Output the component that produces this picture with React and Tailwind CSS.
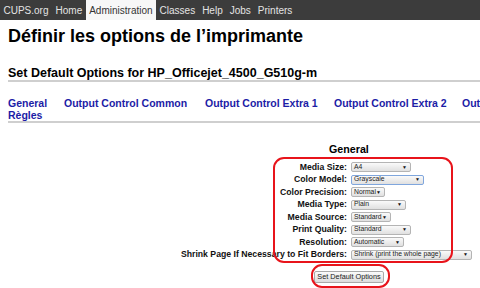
const navItems = ["CUPS.org", "Home", "Administration", "Classes", "Help", "Jobs", "Printers"];

const tabs = [
  { label: "General", w: "w-[56px]" },
  { label: "Output Control Common", w: "w-[141px]" },
  { label: "Output Control Extra 1", w: "w-[129px]" },
  { label: "Output Control Extra 2", w: "w-[128px]" },
  { label: "Output Control Extra 3", w: "w-[130px]" },
];

const options = [
  { label: "Media Size:", value: "A4", w: "w-[60px]" },
  { label: "Color Model:", value: "Grayscale", w: "w-[73px]", focus: true },
  { label: "Color Precision:", value: "Normal", w: "w-[34px]" },
  { label: "Media Type:", value: "Plain", w: "w-[55px]" },
  { label: "Media Source:", value: "Standard", w: "w-[40px]" },
  { label: "Print Quality:", value: "Standard", w: "w-[60px]" },
  { label: "Resolution:", value: "Automatic", w: "w-[53px]" },
  { label: "Shrink Page If Necessary to Fit Borders:", value: "Shrink (print the whole page)", w: "w-[121px]" },
];

function FakeSelect({ value, w, focus }) {
  return (
    <div
      className={`${w} h-[10px] flex items-center justify-between pl-[2px] pr-[3px] rounded-[2px] border bg-gradient-to-b from-[#fafafa] to-[#e0e0e0] text-[6.8px] leading-none text-[#222] overflow-hidden ${
        focus ? "border-[#7fa6dd]" : "border-[#b4b4b4]"
      }`}
    >
      <span className="whitespace-nowrap">{value}</span>
      <span className="text-[5px] text-[#111]">▼</span>
    </div>
  );
}

export default function App() {
  return (
    <div className="relative w-[480px] h-[288px] overflow-hidden bg-white font-['Liberation_Sans',Arial,sans-serif] text-black">
      {/* barre de navigation */}
      <div className="h-[20px] bg-[#3c3c3c] flex items-stretch text-[10px]">
        {navItems.map((item) => (
          <div
            key={item}
            className={`px-[3.5px] flex items-center ${
              item === "Administration" ? "bg-[#f7f7f7] text-[#333]" : "text-[#e4e4e4]"
            }`}
          >
            {item}
          </div>
        ))}
      </div>

      <h1 className="pl-[8px] pt-[6px] text-[18px] font-bold leading-[21px]">
        Définir les options de l’imprimante
      </h1>

      <h2 className="ml-[8px] mt-[19px] border-b-2 border-[#cfcfcf] text-[12.5px] font-bold leading-[14px] whitespace-nowrap">
        Set Default Options for HP_Officejet_4500_G510g-m
      </h2>

      {/* onglets */}
      <div className="ml-[8px] mt-[15px] border-b-2 border-[#cfcfcf] text-[10.5px] font-bold leading-[12px] text-[#1c1ca6]">
        <div className="flex whitespace-nowrap">
          {tabs.map((t) => (
            <div key={t.label} className={`${t.w} shrink-0`}>
              {t.label}
            </div>
          ))}
        </div>
        <div>Règles</div>
      </div>

      {/* formulaire */}
      <div className="ml-[181px] w-[290px] mt-[20px]">
        <div className="pl-[148px] text-[10.7px] font-bold leading-[12px]">General</div>
        <div className="mt-[6px] grid grid-cols-[166px_1fr] gap-x-[4px]">
          {options.map((o) => (
            <div key={o.label} className="contents">
              <div className="h-[12.5px] flex items-center justify-end text-[8.7px] font-bold whitespace-nowrap text-[#111]">
                {o.label}
              </div>
              <div className="h-[12.5px] flex items-center">
                <FakeSelect value={o.value} w={o.w} focus={o.focus} />
              </div>
            </div>
          ))}
        </div>
        <div className="mt-[10px] pl-[133px] flex">
          <button className="w-[70px] h-[12px] rounded-[2px] border border-[#a9a9a9] bg-gradient-to-b from-[#fbfbfb] to-[#dcdcdc] text-[7.3px] leading-none text-[#222] whitespace-nowrap">
            Set Default Options
          </button>
        </div>
      </div>

      {/* annotations */}
      <div className="absolute left-[273px] top-[157px] w-[180px] h-[106px] border-2 border-[#e8141b] rounded-[11px]" />
      <div className="absolute left-[311px] top-[264px] w-[79px] h-[24px] border-2 border-[#e8141b] rounded-[11px]" />
    </div>
  );
}
